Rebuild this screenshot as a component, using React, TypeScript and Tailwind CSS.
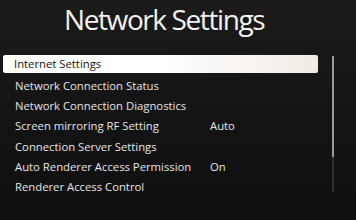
const rows: { label: string; value?: string }[] = [
  { label: "Internet Settings" },
  { label: "Network Connection Status" },
  { label: "Network Connection Diagnostics" },
  { label: "Screen mirroring RF Setting", value: "Auto" },
  { label: "Connection Server Settings" },
  { label: "Auto Renderer Access Permission", value: "On" },
  { label: "Renderer Access Control" },
];

export default function App() {
  return (
    <div
      className="w-[356px] h-[220px] overflow-hidden bg-gradient-to-b from-[#1c1b1a] via-[#141414] to-[#0f0f0f] text-[#e6e6e6]"
      style={{ fontFamily: '"Open Sans", "Noto Sans", sans-serif' }}
    >
      <h1 className="pl-[64px] text-[28px] leading-[38px] tracking-[-1.4px] text-[#f2f2f2]">
        Network Settings
      </h1>
      <div className="flex mt-[17px]">
        <ul className="w-[318px] pl-[3px] flex flex-col">
          {rows.map((row, i) => (
            <li
              key={row.label}
              className={
                i === 0
                  ? "flex items-center h-[18px] mb-[3px] pl-[11px] rounded-[2px] bg-gradient-to-r from-white via-white to-[#f1ebe4] text-[#111] text-[11.3px]"
                  : "flex items-center h-[20.3px] pl-[12px] text-[11.3px]"
              }
            >
              <span className="w-[195px] whitespace-nowrap">{row.label}</span>
              {row.value && <span>{row.value}</span>}
            </li>
          ))}
        </ul>
        <div className="ml-[14px] mt-[1px] w-[2px] h-[136px] bg-[#2e2e2e] flex flex-col">
          <div className="h-[101px] bg-[#9a9a9a]" />
        </div>
      </div>
    </div>
  );
}
